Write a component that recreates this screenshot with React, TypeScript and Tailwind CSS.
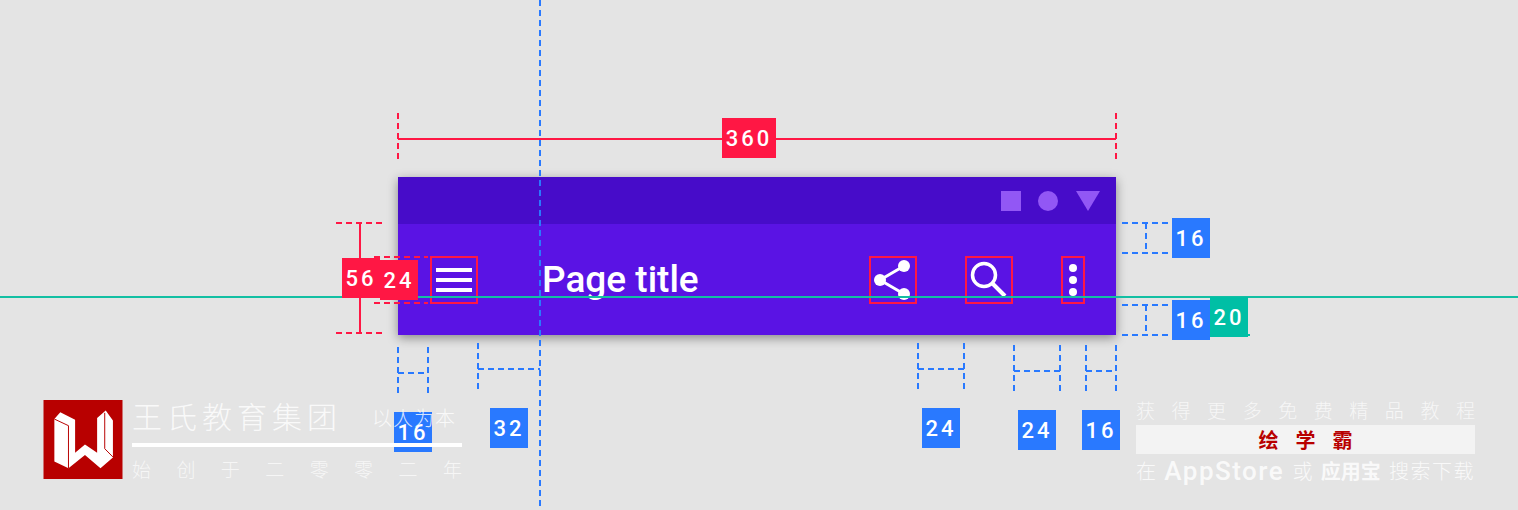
import React from "react";

const cjk = "font-['Noto_Sans_CJK_SC','Noto_Sans',sans-serif]";

function Tag({ className, children }: { className: string; children: React.ReactNode }) {
  return (
    <div
      className={`absolute flex h-10 items-center justify-center font-['Roboto',sans-serif] text-[22px] font-medium tracking-[3px] text-white ${className}`}
    >
      {children}
    </div>
  );
}

function Guides() {
  return (
    <svg className="absolute left-0 top-0" width="1518" height="510" fill="none">
      <g stroke="#2979ff" strokeWidth="2" strokeDasharray="6 4">
        <path d="M540 0V510" />
        <path d="M1122 223H1172M1122 253H1172M1146 223V253" />
        <path d="M1122 305H1172M1122 335H1172M1146 305V335" />
        <path d="M398 347V397M428 347V397M398 373H428" />
        <path d="M478 343V393M478 369H540" />
        <path d="M918 343V393M964 343V393M918 369H964" />
        <path d="M1014 345V395M1060 345V395M1014 371H1060" />
        <path d="M1086 345V395M1116 345V395M1086 371H1116" />
      </g>
      <g stroke="#ff1744" strokeWidth="2">
        <path d="M398 139H1116" />
        <path d="M360 223V333" />
        <path d="M398 113V163M1116 113V163" strokeDasharray="6 4" />
        <path d="M336 223H386M336 333H386" strokeDasharray="6 4" />
        <path d="M374 257H428M374 303H428" strokeDasharray="6 4" />
      </g>
      <path d="M0 297H1518" stroke="#12bfa3" strokeWidth="2" />
      <path d="M1204 335H1254" stroke="#00bfa5" strokeWidth="2" strokeDasharray="6 4" />
    </svg>
  );
}

function ShareIcon() {
  return (
    <svg width="44" height="44" viewBox="0 0 44 44" fill="white">
      <circle cx="33" cy="8" r="6" />
      <circle cx="9" cy="22" r="6" />
      <circle cx="33" cy="36" r="6" />
      <path d="M33 8L9 22L33 36" fill="none" stroke="white" strokeWidth="3" />
    </svg>
  );
}

function SearchIcon() {
  return (
    <svg width="44" height="44" viewBox="0 0 44 44" fill="none" stroke="white">
      <circle cx="17" cy="17" r="11.5" strokeWidth="3.5" />
      <path d="M25.5 25.5L38 38" strokeWidth="4" />
    </svg>
  );
}

function AppBar() {
  return (
    <div className="absolute left-[398px] top-[177px] w-[718px] shadow-[0_3px_10px_rgba(0,0,0,0.4)]">
      <div className="flex h-[47px] items-center justify-end gap-4 bg-[#470cc9] pr-4">
        <div className="h-5 w-5 bg-[#9257f5]" />
        <div className="ml-[1px] h-5 w-5 rounded-full bg-[#9257f5]" />
        <svg width="24" height="20" viewBox="0 0 24 20" fill="#9257f5" className="ml-[2px]">
          <path d="M0 0H24L12 20Z" />
        </svg>
      </div>
      <div className="flex h-[111px] items-center bg-[#5a13e4] pl-8 pr-[31px]">
        <div className="flex h-[48px] w-[48px] flex-col items-center justify-center gap-[6px] border-2 border-[#ff1744]">
          <div className="h-1 w-9 bg-white" />
          <div className="h-1 w-9 bg-white" />
          <div className="h-1 w-9 bg-white" />
        </div>
        <div className="ml-[64px] font-['Roboto',sans-serif] text-[37px] font-medium leading-none text-white">
          Page title
        </div>
        <div className="ml-auto flex items-center gap-12">
          <div className="flex h-[48px] w-[48px] items-center justify-center border-2 border-[#ff1744]">
            <ShareIcon />
          </div>
          <div className="flex h-[48px] w-[48px] items-center justify-center border-2 border-[#ff1744]">
            <SearchIcon />
          </div>
          <div className="flex h-[48px] w-6 flex-col items-center justify-center gap-1 border-2 border-[#ff1744]">
            <div className="h-2 w-2 rounded-full bg-white" />
            <div className="h-2 w-2 rounded-full bg-white" />
            <div className="h-2 w-2 rounded-full bg-white" />
          </div>
        </div>
      </div>
    </div>
  );
}

function Logo() {
  return (
    <svg width="80" height="79" viewBox="0 0 80 80" className="shrink-0">
      <rect width="80" height="80" fill="#b80000" />
      <path
        d="M11 19.3L17 12.3L32 20V53.3L42 45L54.3 53.3V18.3L63 10.7L70.3 20.7V58.3L57.7 69L42 55.7L25.3 69L11 62.3Z"
        fill="white"
      />
      <path d="M11 19.3L25.3 26V69M62 13V49.3L70.3 57.7" fill="none" stroke="#b80000" strokeWidth="1" />
    </svg>
  );
}

function BrandLeft() {
  return (
    <div className={`absolute left-[43px] top-[400px] flex gap-[9px] text-white ${cjk}`}>
      <Logo />
      <div className="flex w-[330px] flex-col">
        <div className="flex h-[30px] items-center justify-between opacity-80">
          <span className="text-[30px] font-light leading-none tracking-[5px]">王氏教育集团</span>
          <span className="mr-[6px] mt-[6px] text-[20px] font-light leading-none tracking-[1px]">以人为本</span>
        </div>
        <div className="mt-[13px] h-1 bg-white" />
        <div className="mt-[12px] flex justify-between text-[19px] font-light leading-none opacity-70">
          {["始", "创", "于", "二", "零", "零", "二", "年"].map((c, i) => (
            <span key={i}>{c}</span>
          ))}
        </div>
      </div>
    </div>
  );
}

function BrandRight() {
  return (
    <div className={`absolute left-[1136px] top-[400px] flex w-[339px] flex-col text-white ${cjk}`}>
      <div className="flex h-[20px] justify-between text-[19px] font-light leading-none opacity-70">
        {"获得更多免费精品教程".split("").map((c, i) => (
          <span key={i}>{c}</span>
        ))}
      </div>
      <div className="mt-[5px] flex h-[29px] items-center justify-center gap-[17px] bg-[#f3f3f3] text-[20px] font-bold leading-none text-[#b80000]">
        <span>绘</span>
        <span>学</span>
        <span>霸</span>
      </div>
      <div className="mt-[3px] flex h-[28px] items-center justify-between text-[20px] font-light leading-none opacity-80">
        <span>在</span>
        <span className="font-['Roboto',sans-serif] text-[26px] font-medium tracking-[1.5px]">AppStore</span>
        <span>或</span>
        <span className="font-bold">应用宝</span>
        <span className="tracking-[1.5px]">搜索下载</span>
      </div>
    </div>
  );
}

export default function App() {
  return (
    <div className="relative h-[510px] w-full overflow-hidden bg-[#e4e4e4]">
      <AppBar />
      <Guides />
      <Tag className="left-[722px] top-[118px] w-[54px] bg-[#ff1744]">360</Tag>
      <Tag className="left-[342px] top-[258px] w-[38px] bg-[#ff1744]">56</Tag>
      <Tag className="left-[380px] top-[260px] w-[38px] bg-[#ff1744]">24</Tag>
      <Tag className="left-[1172px] top-[218px] w-[38px] bg-[#2979ff]">16</Tag>
      <Tag className="left-[1172px] top-[300px] w-[38px] bg-[#2979ff]">16</Tag>
      <Tag className="left-[1210px] top-[297px] w-[38px] bg-[#00bfa5]">20</Tag>
      <Tag className="left-[394px] top-[412px] w-[38px] bg-[#2979ff]">16</Tag>
      <Tag className="left-[490px] top-[408px] w-[38px] bg-[#2979ff]">32</Tag>
      <Tag className="left-[922px] top-[408px] w-[38px] bg-[#2979ff]">24</Tag>
      <Tag className="left-[1018px] top-[410px] w-[38px] bg-[#2979ff]">24</Tag>
      <Tag className="left-[1082px] top-[410px] w-[38px] bg-[#2979ff]">16</Tag>
      <BrandLeft />
      <BrandRight />
    </div>
  );
}
